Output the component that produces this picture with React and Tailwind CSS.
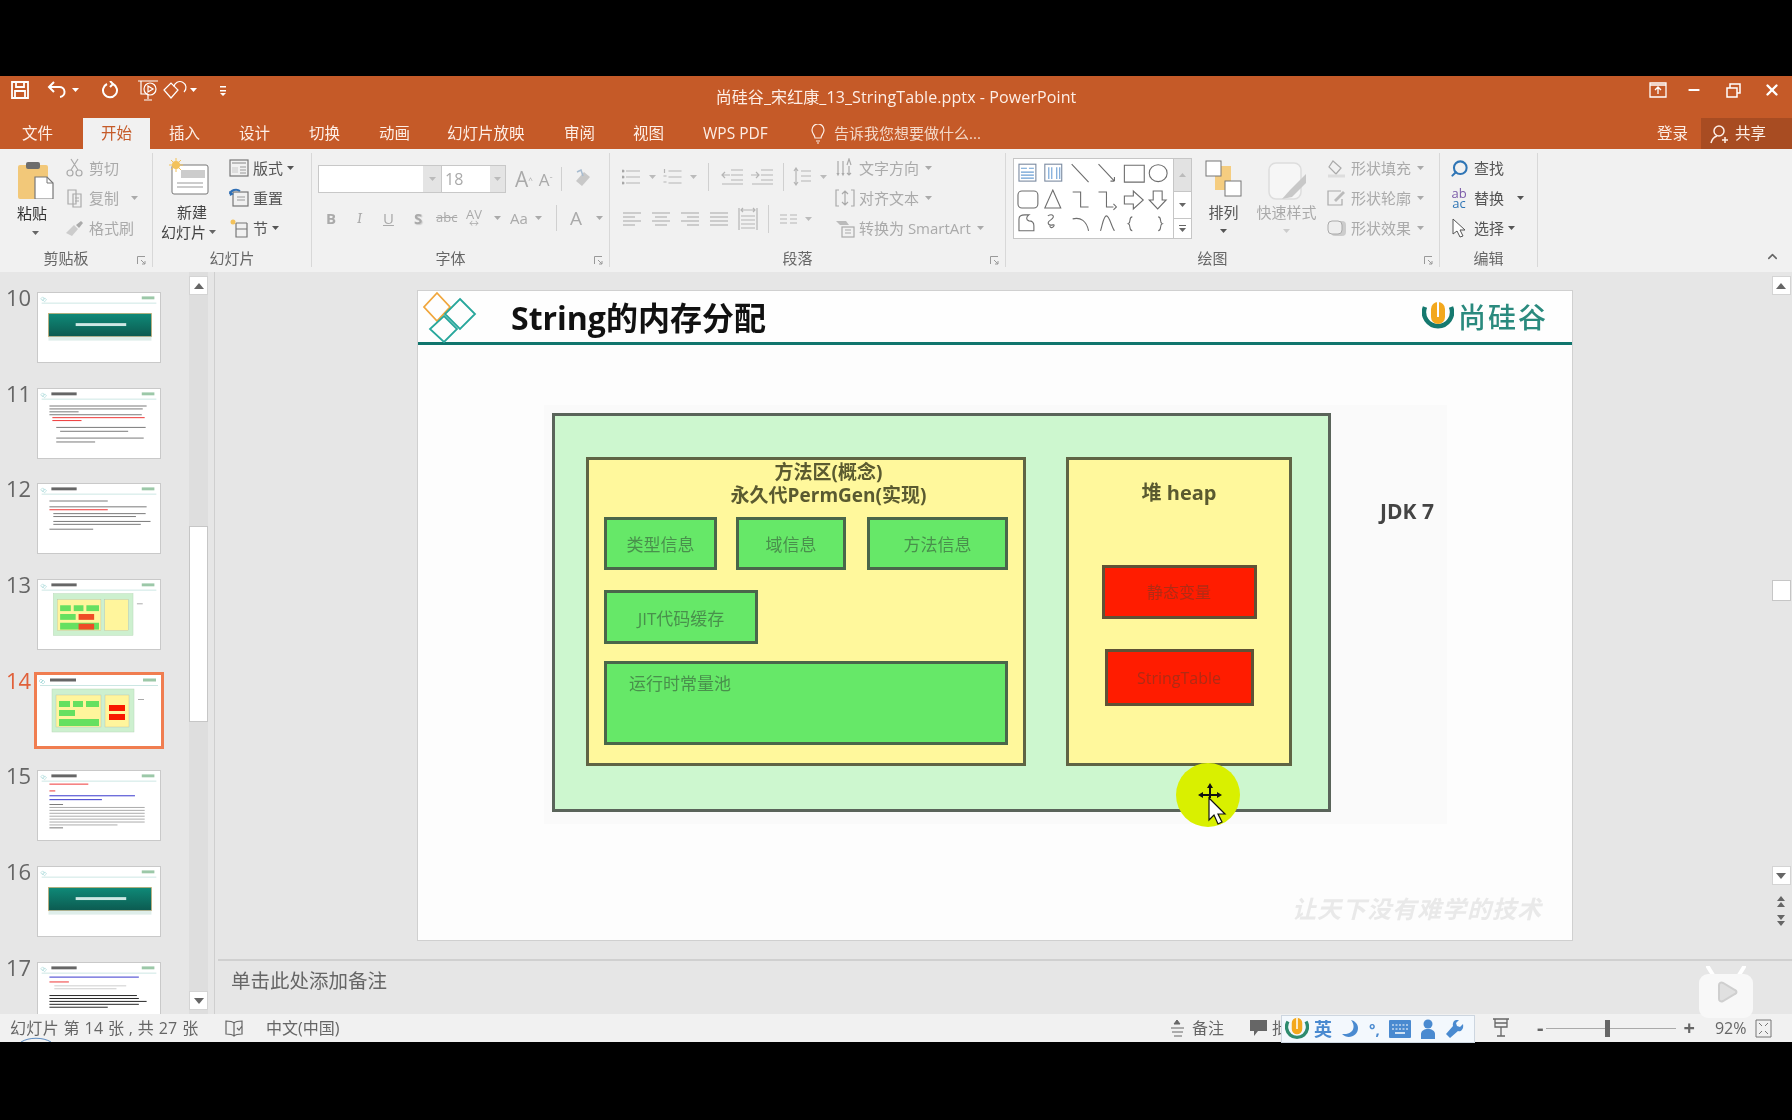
import React from 'react';
import { Search, X, Minus, ChevronUp } from 'lucide-react';

const Caret = ({ className = '' }) => (
  <svg width="7" height="4" viewBox="0 0 7 4" className={`shrink-0 ${className}`}>
    <path d="M0 0h7L3.5 4z" fill="currentColor" />
  </svg>
);

const Launcher = () => (
  <svg width="9" height="9" viewBox="0 0 9 9" className="absolute right-[6px] bottom-[2px] text-[#999]" fill="none" stroke="currentColor">
    <path d="M.5 8V.5H8M4 4l4 4M8 5v3H5" />
  </svg>
);

const Group = ({ width, label, launcher, children }) => (
  <div className={`${width} relative flex h-full shrink-0 flex-col border-r border-[#d8d8d8]`}>
    <div className="h-[97px]">{children}</div>
    <div className={`flex h-[17px] items-center justify-center text-[15px] text-[#666] ${launcher ? 'pr-[20px]' : ''}`}>{label}</div>
    {launcher && <Launcher />}
  </div>
);

const Row = ({ icon, label, caret, gap = 'ml-[4px]', dark, caretClass = 'ml-[6px]' }) => (
  <div className={`flex h-[30px] items-center text-[15px] ${dark ? 'text-[#555]' : 'text-[#aaa]'}`}>
    <div className="flex w-[20px] shrink-0 justify-center">{icon}</div>
    <span className={`whitespace-nowrap ${gap}`}>{label}</span>
    {caret && <Caret className={caretClass} />}
  </div>
);

const SmallIcon = ({ children, w = 20, h = 20 }) => (
  <svg width={w} height={h} viewBox="0 0 20 20" fill="none" stroke="currentColor" strokeWidth="1.2">{children}</svg>
);

const Lines = ({ kind }) => {
  const map = {
    left: ['M1 3h18', 'M1 7h12', 'M1 11h18', 'M1 15h12'],
    center: ['M1 3h18', 'M4 7h12', 'M1 11h18', 'M4 15h12'],
    right: ['M1 3h18', 'M7 7h12', 'M1 11h18', 'M7 15h12'],
    justify: ['M1 3h18', 'M1 7h18', 'M1 11h18', 'M1 15h18'],
    columns: ['M1 5h7M11 5h7', 'M1 9h7M11 9h7', 'M1 13h7M11 13h7'],
  };
  return (
    <svg width="20" height="18" viewBox="0 0 20 18" fill="none" stroke="#b5b5b5" strokeWidth="1.2">
      {map[kind].map((d) => <path key={d} d={d} />)}
    </svg>
  );
};

const Gallery = () => (
  <div className="mt-[5px] flex h-[81px] w-[179px] border border-[#c6c6c6] bg-white">
    <svg width="160" height="79" viewBox="0 0 160 79" fill="none" stroke="#6d6d6d" strokeWidth="1.1">
      <rect x="5" y="5" width="17" height="17" stroke="#7a8aa0" />
      <path d="M7 9h6M15 9h5M7 13h13M7 16h13M7 19h13" stroke="#6a9ed4" />
      <rect x="31" y="5" width="17" height="17" stroke="#7a8aa0" />
      <path d="M35 8v12M38 8v12M43 8v12M46 8v12" stroke="#6a9ed4" />
      <path d="M58 5l17 18M85 5l16 17M101 22v-4M101 22h-4M111 6h20v17h-20z" />
      <ellipse cx="145" cy="14" rx="9" ry="8.5" />
      <rect x="4" y="32" width="20" height="17" rx="4" />
      <path d="M39 31l8 18H31zM59 33h8v15h8M85 33h8v15h7M100 45l3 3-3 3M111 37h9v-5l10 9-10 9v-5h-9zM140 32h9v9h4l-8.500 9-8.500-9h4z" />
      <path d="M5 72V60c0-3 3-4 6-4h4c-3 2-3 5 0 6 3 0 5 2 5 5v5zM34 57c5-3 8 1 3 4s-2 6 2 5-2 6-3 1M59 60c8-2 14 2 16 12M87 72c2-6 3-15 6-15s5 11 8 15M119 58c-4 0-1 6-4 7 3 1 0 7 4 7M145 58c4 0 1 6 4 7-3 1 0 7-4 7" />
    </svg>
    <div className="flex w-[18px] flex-col border-l border-[#c6c6c6] text-[#666]">
      <div className="flex h-[32px] items-center justify-center bg-[#e2e2e2] text-[#bbb]"><Caret className="rotate-180" /></div>
      <div className="flex h-[27px] items-center justify-center border-t border-[#c6c6c6]"><Caret /></div>
      <div className="flex flex-1 flex-col items-center justify-center gap-[2px] border-t border-[#c6c6c6]">
        <div className="h-px w-[7px] bg-[#666]" />
        <Caret />
      </div>
    </div>
  </div>
);

const Ribbon = () => (
  <div className="flex h-[123px] shrink-0 bg-[#f1f1f1] pt-[4px] pb-[5px]">
    <Group width="w-[153px]" label="剪贴板" launcher>
      <div className="flex pl-[17px]">
        <div className="flex w-[48px] flex-col">
          <svg width="37" height="39" viewBox="0 0 37 39" className="mt-[7px]">
            <rect x="1" y="5" width="30" height="34" rx="2" fill="#f2c879" />
            <rect x="9" y="2" width="14" height="7" rx="2" fill="#6d6d6d" />
            <path d="M18 17h12l6 6v16H18z" fill="#fff" stroke="#777" strokeWidth="1.2" />
            <path d="M30 17v6h6" fill="none" stroke="#777" />
          </svg>
          <span className="mt-[4px] text-[15px] leading-[20px] text-[#333]">粘贴</span>
          <Caret className="mt-[8px] ml-[15px] text-[#666]" />
        </div>
        <div className="flex flex-col">
          <Row label="剪切" icon={<SmallIcon><circle cx="5" cy="15" r="3" /><circle cx="14" cy="15" r="3" /><path d="M6 12l7-11M13 12L6 1" /></SmallIcon>} />
          <Row label="复制" caret caretClass="ml-[12px]" icon={<SmallIcon><path d="M3 2h8v14H3zM8 6h8v13H8zM10 10h4M10 13h4" /></SmallIcon>} />
          <Row label="格式刷" icon={<svg width="20" height="20" viewBox="0 0 20 20"><path d="M1 15l8-8 4 4-6 7z" fill="#ccc" /><path d="M11 7l5-4 2 2-4 5z" fill="#aaa" /></svg>} />
        </div>
      </div>
    </Group>
    <Group width="w-[159px]" label="幻灯片">
      <div className="flex pl-[9px]">
        <div className="relative flex w-[67px] flex-col items-center pr-[14px]">
          <svg width="42" height="37" viewBox="0 0 42 37" className="mt-[5px] mr-[4px] self-end" fill="none">
            <rect x="3" y="7" width="36" height="29" rx="2" fill="#fff" stroke="#777" />
            <rect x="12" y="12" width="24" height="8" fill="#ccc" />
            <path d="M8 25h26M8 29h26" stroke="#999" />
            <circle cx="7" cy="7" r="4" fill="#f3c25a" />
            <path d="M7 0v14M0 7h14M2 2l10 10M12 2L2 12" stroke="#f3c25a" />
          </svg>
          <span className="mt-[7px] ml-[7px] text-[15px] leading-[20px] text-[#444]">新建</span>
          <div className="flex items-center whitespace-nowrap text-[15px] leading-[20px] text-[#444]">幻灯片<Caret className="ml-[3px] text-[#666]" /></div>
        </div>
        <div className="flex flex-col">
          <Row dark label="版式" caret caretClass="ml-[4px]" icon={<SmallIcon><rect x="1" y="2" width="18" height="16" stroke="#777" /><path d="M3 5h14" stroke="#bbb" strokeWidth="2" /><path d="M3 9h6v6H3z" fill="#ddd" stroke="none" /><path d="M11 9h6M11 12h6M11 15h6" stroke="#999" /></SmallIcon>} />
          <Row dark label="重置" icon={<SmallIcon><rect x="4" y="4" width="15" height="14" stroke="#777" /><path d="M8 9h8M8 12h8" stroke="#999" /><path d="M1 6a6 5 0 0 1 10-3" stroke="#2f6fb5" strokeWidth="2" /><path d="M0 3l1 5 4-2z" fill="#2f6fb5" stroke="none" /></SmallIcon>} />
          <Row dark label="节" caret caretClass="ml-[4px]" icon={<SmallIcon><path d="M7 5h11M7 5v14h11V5M7 11h11" stroke="#777" /><circle cx="4" cy="4" r="2.500" fill="#f3c25a" stroke="none" /></SmallIcon>} />
        </div>
      </div>
    </Group>
    <Group width="w-[298px]" label="字体" launcher>
      <div className="pl-[6px] text-[#aaa]">
        <div className="flex h-[50px] items-center pt-[2px]">
          <div className="flex h-[28px] w-[124px] border border-[#c8c8c8] bg-white">
            <div className="flex-1" />
            <div className="flex w-[18px] items-center justify-center bg-[#e4e4e4] text-[#bbb]"><Caret /></div>
          </div>
          <div className="flex h-[28px] w-[64px] border border-l-0 border-[#c8c8c8] bg-white">
            <span className="flex-1 pl-[3px] text-[16px] leading-[26px] text-[#aaa]">18</span>
            <div className="flex w-[15px] items-center justify-center bg-[#e4e4e4] text-[#bbb]"><Caret /></div>
          </div>
          <span className="ml-[9px] text-[21px] leading-none">A<sup className="text-[8px]">^</sup></span>
          <span className="ml-[6px] text-[17px] leading-none">A<sup className="text-[8px]">ˇ</sup></span>
          <div className="ml-[8px] h-[24px] w-px bg-[#d0d0d0]" />
          <svg width="18" height="20" viewBox="0 0 18 20" className="ml-[12px]"><path d="M2 12l8-9 6 5-8 9z" fill="#c8c8c8" /><path d="M3 3l4-2 2 6" fill="none" stroke="#a8bcd0" strokeWidth="1.500" /></svg>
        </div>
        <div className="flex h-[30px] items-center text-[15px]">
          <span className="ml-[8px] w-[12px] font-bold">B</span>
          <span className="ml-[19px] w-[10px] font-serif italic">I</span>
          <span className="ml-[16px] w-[12px] underline">U</span>
          <span className="ml-[19px] w-[12px] font-bold [text-shadow:1px_1px_1px_#ccc]">S</span>
          <span className="ml-[10px] w-[22px] text-[13px] line-through">abc</span>
          <span className="ml-[6px] flex w-[20px] flex-col items-center text-[13px] leading-[11px]">AV<span className="text-[10px] leading-[7px]">↔</span></span>
          <Caret className="ml-[10px]" />
          <span className="ml-[9px] w-[20px]">Aa</span>
          <Caret className="ml-[5px]" />
          <div className="ml-[14px] h-[26px] w-px bg-[#d0d0d0]" />
          <span className="ml-[13px] w-[14px] text-[19px]">A</span>
          <Caret className="ml-[12px]" />
        </div>
      </div>
    </Group>
    <Group width="w-[396px]" label="段落" launcher>
      <div className="flex pl-[12px]">
        <div className="flex w-[213px] flex-col pt-[9px]">
          <div className="flex h-[30px] items-center text-[#bbb]">
            <svg width="18" height="18" viewBox="0 0 18 18" stroke="#b5b5b5" strokeWidth="1.2"><path d="M4 3h14M4 9h14M4 15h14" /><circle cx="1" cy="3" r="1" /><circle cx="1" cy="9" r="1" /><circle cx="1" cy="15" r="1" /></svg>
            <Caret className="ml-[9px]" />
            <svg width="19" height="18" viewBox="0 0 18 18" stroke="#b5b5b5" strokeWidth="1.2" className="ml-[7px]"><path d="M5 3h13M5 9h13M5 15h13M1 1v4M0 8h3M0 14h3" /></svg>
            <Caret className="ml-[8px]" />
            <div className="ml-[11px] h-[28px] w-px bg-[#d0d0d0]" />
            <svg width="22" height="16" viewBox="0 0 22 16" stroke="#b5b5b5" strokeWidth="1.2" fill="none" className="ml-[12px]"><path d="M10 1h12M10 6h12M10 11h12M1 15h21M1 6h8M4 3L1 6l3 3" /></svg>
            <svg width="22" height="16" viewBox="0 0 22 16" stroke="#b5b5b5" strokeWidth="1.2" fill="none" className="ml-[8px]"><path d="M10 1h12M10 6h12M10 11h12M1 15h21M0 6h8M5 3l3 3-3 3" /></svg>
            <div className="ml-[10px] h-[28px] w-px bg-[#d0d0d0]" />
            <svg width="18" height="20" viewBox="0 0 18 20" stroke="#b5b5b5" strokeWidth="1.2" fill="none" className="ml-[9px]"><path d="M8 4h10M8 9h10M8 14h10M3 1v17M1 4l2-3 2 3M1 15l2 3 2-3" /></svg>
            <Caret className="ml-[9px]" />
          </div>
          <div className="mt-[12px] flex h-[30px] items-center text-[#bbb]">
            <Lines kind="left" />
            <div className="ml-[9px]"><Lines kind="center" /></div>
            <div className="ml-[9px]"><Lines kind="right" /></div>
            <div className="ml-[9px]"><Lines kind="justify" /></div>
            <svg width="20" height="24" viewBox="0 0 20 24" stroke="#b5b5b5" strokeWidth="1.2" fill="none" className="ml-[9px]"><path d="M1 1v22M19 1v22M3 3h14M5 1L3 3l2 2M15 1l2 2-2 2M3 9h14M3 13h14M3 17h14M3 21h14" /></svg>
            <div className="ml-[10px] h-[28px] w-px bg-[#d0d0d0]" />
            <div className="ml-[10px]"><Lines kind="columns" /></div>
            <Caret className="ml-[6px]" />
          </div>
        </div>
        <div className="flex flex-col">
          <Row label="文字方向" caret icon={<SmallIcon><path d="M3 3v14M8 3v14M2 15l1 2 1-2M7 15l1 2 1-2M14 8v9M12 15l2 2 2-2M12 7l2-6 2 6" /></SmallIcon>} />
          <Row label="对齐文本" caret icon={<SmallIcon><path d="M4 2H1v16h3M16 2h3v16h-3M10 4v12M7 6l3-3 3 3M7 14l3 3 3-3" /></SmallIcon>} />
          <Row label="转换为 SmartArt" caret icon={<SmallIcon><path d="M1 3h10l3 4H5z" fill="#bbb" stroke="none" /><rect x="7" y="9" width="12" height="10" /><path d="M10 12h6M10 15h6" /></SmallIcon>} />
        </div>
      </div>
    </Group>
    <Group width="w-[434px]" label="绘图" launcher>
      <div className="flex pl-[7px]">
        <Gallery />
        <div className="ml-[13px] flex w-[37px] flex-col items-center text-[#555]">
          <svg width="37" height="37" viewBox="0 0 37 37" className="mt-[7px]">
            <rect x="10" y="6" width="16" height="24" fill="#f5cd80" />
            <rect x="1" y="1" width="15" height="15" fill="#fff" stroke="#777" />
            <rect x="20" y="21" width="16" height="15" fill="#fff" stroke="#777" />
          </svg>
          <span className="mt-[5px] whitespace-nowrap text-[15px] leading-[20px]">排列</span>
          <Caret className="mt-[7px]" />
        </div>
        <div className="ml-[13px] flex w-[63px] flex-col items-center text-[#aaa]">
          <svg width="38" height="38" viewBox="0 0 38 38" className="mt-[9px]" fill="none">
            <rect x="1" y="1" width="32" height="36" rx="7" fill="#f6f6f6" stroke="#ddd" strokeWidth="1.500" />
            <path d="M38 12L22 28l-8 9 10-2 14-14z" fill="#c8c8c8" />
          </svg>
          <span className="mt-[2px] whitespace-nowrap text-[15px] leading-[20px]">快速样式</span>
          <Caret className="mt-[7px] text-[#ccc]" />
        </div>
        <div className="ml-[9px] flex flex-col">
          <Row label="形状填充" caret icon={<SmallIcon><path d="M6 3l8 7-5 6-7-7z" /><path d="M1 18h17" strokeWidth="3" stroke="#ddd" /></SmallIcon>} />
          <Row label="形状轮廓" caret icon={<SmallIcon><path d="M14 3H1v14h14v-6" /><path d="M7 12l9-9 2 2-9 9z" fill="#bbb" stroke="none" /></SmallIcon>} />
          <Row label="形状效果" caret icon={<svg width="20" height="18" viewBox="0 0 20 18"><rect x="4" y="2" width="15" height="15" rx="4" fill="#ccc" /><rect x="1" y="2" width="14" height="13" rx="4" fill="#eee" stroke="#aaa" /></svg>} />
        </div>
      </div>
    </Group>
    <Group width="w-[98px]" label="编辑">
      <div className="flex flex-col pl-[9px] text-[#555]">
        <Row dark label="查找" gap="ml-[5px]" icon={<Search size={19} strokeWidth={2.6} className="-scale-x-100 text-[#2f75b5]" />} />
        <Row dark label="替换" gap="ml-[5px]" caret caretClass="ml-[13px]" icon={<span className="flex flex-col items-center text-[13px] leading-[10px] text-[#2f75b5]"><span className="text-[#7a5aa8]">ab</span><span>ac</span></span>} />
        <Row dark label="选择" gap="ml-[5px]" caret caretClass="ml-[4px]" icon={<svg width="14" height="20" viewBox="0 0 14 20" fill="#fff" stroke="#555"><path d="M1 1v15l4-3 3 6 3-1-3-6h5z" /></svg>} />
      </div>
    </Group>
    <div className="flex flex-1 items-end justify-end pr-[12px] pb-[3px] text-[#666]">
      <ChevronUp size={15} strokeWidth={2.5} />
    </div>
  </div>
);

const TitleBar = () => (
  <div className="shrink-0 bg-[#c55a28] text-[#fdeee6]">
    <div className="relative flex h-[42px] items-start pt-[5px]">
      <div className="flex h-[18px] items-center pl-[11px] text-white">
        <svg width="18" height="18" viewBox="0 0 18 18" fill="none" stroke="currentColor" strokeWidth="1.800"><path d="M1 1h16v16H1zM5 1v5h8V1M4 17v-7h10v7" /></svg>
        <svg width="20" height="18" viewBox="0 0 20 18" fill="none" stroke="currentColor" strokeWidth="2" className="ml-[18px]"><path d="M2 6h10a5 5 0 0 1 1 10M7 1L2 6l5 5" /></svg>
        <Caret className="ml-[5px]" />
        <svg width="18" height="18" viewBox="0 0 18 18" fill="none" stroke="currentColor" strokeWidth="2" className="ml-[22px]"><path d="M6 3a7 7 0 1 0 6 0M9 0l3 3-3 3" /></svg>
        <svg width="20" height="22" viewBox="0 0 20 22" fill="none" stroke="currentColor" strokeWidth="1.200" className="ml-[19px]"><path d="M0 2h20M3 2v13h7M10 15v5M6 21h8" /><circle cx="12" cy="10" r="6" /><path d="M10 7l5 3-5 3z" /></svg>
        <svg width="24" height="20" viewBox="0 0 24 20" fill="none" stroke="currentColor" strokeWidth="1.200" className="ml-[5px]"><path d="M1 10l7-7 7 7-7 8zM11 7a6 6 0 1 1 10 5" /></svg>
        <Caret className="ml-[3px]" />
        <svg width="8" height="12" viewBox="0 0 8 12" fill="currentColor" className="ml-[22px]"><path d="M1 2h6v1.500H1zM1 6h6v1.500H1zM1 9l3 3 3-3z" /></svg>
      </div>
      <div className="absolute inset-x-0 top-[9px] flex justify-center text-[16px] leading-[24px] tracking-[0.1px] whitespace-nowrap">
        尚硅谷_宋红康_13_StringTable.pptx - PowerPoint
      </div>
      <div className="ml-auto flex h-[18px] items-center text-white">
        <svg width="18" height="16" viewBox="0 0 18 16" fill="none" stroke="currentColor" strokeWidth="1.300"><path d="M1 1h16v14H1zM1 3h16M9 12V6M6 8l3-3 3 3" /></svg>
        <Minus size={16} strokeWidth={3} className="ml-[19px]" />
        <svg width="15" height="15" viewBox="0 0 15 15" fill="none" stroke="currentColor" strokeWidth="1.500" className="ml-[24px]"><path d="M1 5h10v9H1zM4 5V1h10v9h-3" /></svg>
        <X size={18} strokeWidth={3.2} className="mr-[11px] ml-[22px]" />
      </div>
    </div>
    <div className="flex h-[31px] items-center text-[15.5px] whitespace-nowrap">
      <span className="ml-[22px] w-[32px]">文件</span>
      <div className="ml-[29px] flex h-full w-[67px] items-center justify-center bg-[#f1f1f1] text-[#c55a28]">开始</div>
      <span className="ml-[19px] w-[32px]">插入</span>
      <span className="ml-[38px] w-[32px]">设计</span>
      <span className="ml-[38px] w-[32px]">切换</span>
      <span className="ml-[38px] w-[32px]">动画</span>
      <span className="ml-[36px] w-[80px]">幻灯片放映</span>
      <span className="ml-[37px] w-[32px]">审阅</span>
      <span className="ml-[37px] w-[32px]">视图</span>
      <span className="ml-[38px] w-[69px]">WPS PDF</span>
      <svg width="14" height="20" viewBox="0 0 14 20" fill="none" stroke="currentColor" strokeWidth="1.200" className="ml-[39px]"><path d="M4 14c0-3-3-4-3-8a6 6 0 0 1 12 0c0 4-3 5-3 8zM5 17h4M6 19h2" /></svg>
      <span className="ml-[9px] text-[15px] text-[#f3d8c8]">告诉我您想要做什么...</span>
      <span className="ml-auto">登录</span>
      <div className="ml-[13px] flex h-full w-[91px] items-center bg-[#a84c22] pl-[9px]">
        <svg width="20" height="20" viewBox="0 0 20 20" fill="none" stroke="currentColor" strokeWidth="1.500"><circle cx="9" cy="7" r="5" /><path d="M1 19c1-4 3-6 6-7M15 13v6M12 16h6" /></svg>
        <span className="ml-[5px]">共享</span>
      </div>
    </div>
  </div>
);

const ThumbHead = () => (
  <>
    <path d="M4 4l2 2-2 2-2-2zM6 5l2 2-2 2-2-2z" fill="none" stroke="#8cc" strokeWidth=".5" />
    <rect x="3" y="10" width="118" height=".8" fill="#bfe0dc" />
  </>
);

const Thumb = ({ children, title = true }) => (
  <svg width="124" height="71" viewBox="0 0 124 71" className="block border border-[#c9c9c9] bg-white">
    <ThumbHead />
    {title && <rect x="13" y="3.500" width="26" height="3" fill="#666" />}
    <rect x="106" y="3.500" width="13" height="3" fill="#9cc8a8" />
    {children}
  </svg>
);

const TextLines = ({ rows }) => rows.map(([x, y, w, c], i) => (
  <rect key={i} x={x} y={y} width={w} height="1" fill={c || '#777'} />
));

const Section = () => (
  <Thumb title={false}>
    <defs>
      <linearGradient id="sectionFill" x1="0" y1="0" x2="0" y2="1">
        <stop offset="0" stopColor="#0f8a78" />
        <stop offset="1" stopColor="#0c5a50" />
      </linearGradient>
    </defs>
    <rect x="10" y="21" width="106" height="24" fill="url(#sectionFill)" stroke="#d9a860" strokeWidth=".6" />
    <rect x="10" y="45" width="106" height="4" fill="#dfeeea" />
    <rect x="38" y="31" width="52" height="3" fill="#cfe8e4" />
  </Thumb>
);

const MiniDiagram = ({ active }) => (
  <>
    <rect x="15" y="14" width="82" height="43" fill="#cdf0cf" stroke="#b8d8b8" strokeWidth=".5" />
    <rect x="19" y="20" width="45" height="32" fill="#fff59c" stroke="#aaa" strokeWidth=".3" />
    <rect x="68" y="20" width="24" height="32" fill="#fff59c" stroke="#aaa" strokeWidth=".3" />
    <rect x="22" y="26" width="11" height="6" fill="#66e060" />
    <rect x="36" y="26" width="10" height="6" fill="#66e060" />
    <rect x="49" y="26" width="13" height="6" fill="#66e060" />
    <rect x="22" y="35" width="16" height="6" fill="#66e060" />
    <rect x="22" y="44" width="40" height="7" fill="#66e060" />
    {active ? (
      <>
        <rect x="72" y="30" width="16" height="6" fill="#f81800" />
        <rect x="72" y="39" width="16" height="6" fill="#f81800" />
      </>
    ) : (
      <>
        <rect x="41" y="35" width="16" height="6" fill="#ef4a26" />
        <rect x="41" y="45" width="16" height="6" fill="#ef4a26" />
      </>
    )}
    <rect x="101" y="24" width="6" height="1" fill="#aaa" />
  </>
);

const thumbs = [
  [10, <Section key="a" />],
  [11, <Thumb key="b"><TextLines rows={[[11, 17, 100], [11, 20, 96], [11, 23, 30], [11, 26, 95], [14, 29, 95, '#e33'], [14, 32, 30, '#e33'], [18, 39, 92], [22, 43, 70], [18, 50, 90], [18, 54, 40]]} /></Thumb>],
  [12, <Thumb key="c"><TextLines rows={[[11, 17, 60], [11, 23, 100], [11, 26, 60, '#e33'], [15, 30, 95], [15, 33, 85], [15, 38, 100], [15, 41, 90], [11, 46, 45]]} /></Thumb>],
  [13, <Thumb key="d"><MiniDiagram /></Thumb>],
  [14, null],
  [15, <Thumb key="e"><TextLines rows={[[11, 13, 40, '#e33'], [11, 20, 6, '#e33'], [11, 25, 88, '#33c'], [11, 29, 54, '#33c'], [11, 34, 14], [11, 37, 98, '#aaa'], [11, 40, 98, '#aaa'], [11, 43, 98, '#aaa'], [11, 46, 98, '#aaa'], [11, 49, 98, '#aaa'], [11, 52, 98, '#aaa'], [11, 55, 70, '#aaa'], [11, 58, 14]]} /></Thumb>],
  [16, <Section key="f" />],
  [17, <Thumb key="g"><TextLines rows={[[11, 14, 92, '#33c'], [11, 19, 20, '#e33'], [16, 23, 74, '#ccc'], [16, 26, 64, '#ccc'], [11, 33, 90, '#222'], [11, 36, 92, '#222'], [11, 39, 100, '#222'], [11, 42, 92, '#222'], [11, 45, 60, '#222']]} /></Thumb>],
];

const ThumbList = () => (
  <div className="flex h-full w-[189px] shrink-0 flex-col overflow-hidden pt-[20px]">
    {thumbs.map(([n, content]) => (
      <div key={n} className="flex h-[95.700px] shrink-0 items-start">
        <span className={`-mt-[9px] w-[37px] pl-[6px] text-[22px] leading-[28px] ${n === 14 ? 'text-[#e0603a]' : 'text-[#666]'}`}>{n}</span>
        {n === 14 ? (
          <div className="-mt-[3px] -ml-[3px] border-[3px] border-[#f07d50] bg-white">
            <svg width="124" height="71" viewBox="0 0 124 71" className="block">
              <ThumbHead />
              <rect x="13" y="3.500" width="26" height="3" fill="#666" />
              <rect x="106" y="3.500" width="13" height="3" fill="#9cc8a8" />
              <MiniDiagram active />
            </svg>
          </div>
        ) : content}
      </div>
    ))}
  </div>
);

const ScrollBtn = ({ up }) => (
  <div className="flex h-[19px] w-[19px] shrink-0 items-center justify-center border border-[#d4d4d4] bg-white text-[#666]">
    <svg width="10" height="6" viewBox="0 0 10 6" className={up ? 'rotate-180' : ''}><path d="M0 0h10L5 6z" fill="currentColor" /></svg>
  </div>
);

const LeftPanel = () => (
  <div className="flex w-[215px] shrink-0 border-r border-[#cfcfcf]">
    <ThumbList />
    <div className="flex w-[19px] shrink-0 flex-col bg-[#dedede] pt-[4px] pb-[4px]">
      <ScrollBtn up />
      <div className="mt-[231px] h-[196px] w-[19px] border border-[#c6c6c6] bg-white" />
      <div className="flex-1" />
      <ScrollBtn />
    </div>
  </div>
);

const GreenBox = ({ className, children }) => (
  <div className={`flex items-center justify-center border-[3px] border-[#4a664a] bg-[#66e868] pt-[3px] text-[17px] text-[#49904c] ${className}`}>{children}</div>
);

const RedBox = ({ className, children }) => (
  <div className={`flex items-center justify-center border-[3px] border-[#5f5236] bg-[#ff1c00] text-[16px] text-[#b02c14] ${className}`}>{children}</div>
);

const Slide = () => (
  <div className="relative mt-[18px] ml-[202px] h-[651px] w-[1156px] shrink-0 border border-[#d0d0d0] bg-[#fdfdfd]">
    <div className="flex h-[54px] items-center border-b-[3px] border-[#10756d] bg-[#fefefe]">
      <svg width="54" height="52" viewBox="0 0 54 52" fill="none" strokeWidth="1.800" className="mt-[1px] ml-[5px] shrink-0">
        <path d="M14 2l13 14-13 14L1 16z" stroke="#f0a63c" />
        <path d="M37 8l15 15-15 15-15-15z" stroke="#28a79c" />
        <path d="M21 25l13 13-13 13L7 38z" stroke="#28a79c" />
      </svg>
      <span className="mt-[3px] ml-[34px] text-[32px] leading-none font-bold whitespace-nowrap text-[#111]">String的内存分配</span>
      <div className="mr-[24px] ml-auto flex items-center">
        <svg width="32" height="30" viewBox="0 0 32 30" fill="none">
          <path d="M3 5a14 14 0 1 0 26 0" stroke="#16796f" strokeWidth="4.500" />
          <rect x="9" y="0" width="14" height="22" rx="7" fill="#f3a81d" />
          <rect x="15" y="0" width="2" height="15" fill="#fff" />
        </svg>
        <span className="ml-[4px] text-[28px] leading-none font-medium tracking-[2px] text-[#2a8a7e]">尚硅谷</span>
      </div>
    </div>
    <div className="mt-[60px] ml-[126px] flex h-[419px] w-[903px] bg-[#fafafa] pt-[8px] pl-[8px]">
      <div className="flex h-[399px] w-[779px] shrink-0 border-[3px] border-[#5a645a] bg-[#cdf7cf] pt-[41px] pl-[31px]">
        <div className="flex h-[309px] w-[440px] shrink-0 flex-col border-[3px] border-[#5f6444] bg-[#fff89c] pl-[15px]">
          <div className="h-[57px] pt-[1px] pl-[30px] text-center text-[19px] leading-[23px] font-bold text-[#5a5a30]">
            <div>方法区(概念)</div>
            <div>永久代PermGen(实现)</div>
          </div>
          <div className="flex">
            <GreenBox className="h-[53px] w-[113px]">类型信息</GreenBox>
            <GreenBox className="ml-[19px] h-[53px] w-[110px]">域信息</GreenBox>
            <GreenBox className="ml-[21px] h-[53px] w-[141px]">方法信息</GreenBox>
          </div>
          <GreenBox className="mt-[20px] h-[54px] w-[154px]">JIT代码缓存</GreenBox>
          <div className="mt-[17px] h-[84px] w-[404px] border-[3px] border-[#4a664a] bg-[#66e868] pt-[7px] pl-[22px] text-[17px] text-[#49904c]">运行时常量池</div>
        </div>
        <div className="ml-[40px] flex h-[309px] w-[226px] shrink-0 flex-col items-center border-[3px] border-[#5f6444] bg-[#fff89c]">
          <span className="mt-[20px] text-[20px] leading-[26px] font-bold text-[#5a5a30]">堆 heap</span>
          <RedBox className="mt-[59px] h-[54px] w-[155px]">静态变量</RedBox>
          <RedBox className="mt-[30px] h-[57px] w-[149px]">StringTable</RedBox>
        </div>
      </div>
      <span className="mt-[85px] ml-[49px] text-[21px] leading-[26px] font-bold whitespace-nowrap text-[#444]">JDK 7</span>
    </div>
    <span className="absolute right-[30px] bottom-[12px] font-['Liberation_Serif','Noto_Sans_CJK_SC',serif] text-[24px] font-bold tracking-[1px] whitespace-nowrap text-[#e9e9e9] italic">让天下没有难学的技术</span>
    <div className="absolute top-[472px] left-[758px] h-[64px] w-[64px] rounded-full bg-[#d9f000]" />
    <svg width="34" height="44" viewBox="0 0 34 44" className="absolute top-[490px] left-[777px]">
      <path d="M15 2l3 5h-2v6h6v-2l5 3-5 3v-2h-6v2h-2v-2H8v2l-5-3 5-3v2h6V7h-2z" fill="#111" />
      <path d="M14 17v22l5-5 4 9 4-2-4-8h7z" fill="#fff" stroke="#111" strokeWidth="1.200" />
    </svg>
  </div>
);

const RightScrollbar = () => (
  <div className="flex w-[22px] shrink-0 flex-col items-center bg-[#e6e6e6] pt-[4px]">
    <ScrollBtn up />
    <div className="mt-[285px] h-[21px] w-[19px] border border-[#c6c6c6] bg-white" />
    <div className="mt-[265px]"><ScrollBtn /></div>
    <div className="mt-[11px] flex flex-col items-center gap-[6px] text-[#666]">
      <svg width="10" height="12" viewBox="0 0 10 12" fill="currentColor"><path d="M5 0l4 5H1zM5 6l4 5H1z" /></svg>
      <svg width="10" height="12" viewBox="0 0 10 12" fill="currentColor"><path d="M5 6l4-5H1zM5 12l4-5H1z" /></svg>
    </div>
  </div>
);

const StatusBar = () => (
  <div className="relative flex h-[28px] shrink-0 items-center bg-[#f1f1f1] text-[16px] whitespace-nowrap text-[#666]">
    <span className="ml-[10px] w-[188px] tracking-[0.35px]">幻灯片 第 14 张 , 共 27 张</span>
    <svg width="18" height="17" viewBox="0 0 18 17" fill="none" stroke="currentColor" strokeWidth="1.200" className="ml-[27px]"><path d="M9 3C7 1 4 1 1 1v13c3 0 6 0 8 2 2-2 5-2 8-2V1c-3 0-6 0-8 2zM9 3v13M12 8l2 2 3-4" /></svg>
    <span className="ml-[23px] w-[73px]">中文(中国)</span>
    <svg width="13" height="18" viewBox="0 0 13 18" fill="none" stroke="currentColor" className="ml-[832px]"><path d="M3 5l3-4 3 4z" fill="currentColor" /><path d="M0 9h13M1 13h11M3 17h8" /></svg>
    <span className="ml-[8px] w-[32px]">备注</span>
    <svg width="17" height="18" viewBox="0 0 17 18" fill="#666" className="ml-[26px]"><path d="M0 1h17v11H8l-4 5v-5H0z" /></svg>
    <span className="ml-[5px] w-[9px] overflow-hidden">批注</span>
    <svg width="18" height="20" viewBox="0 0 18 20" fill="none" stroke="#666" strokeWidth="1.300" className="ml-[211px]"><path d="M1 1h16M3 1v8h12V1M3 5h12M9 9v9M5 18h8" /></svg>
    <span className="ml-[27px] text-[20px] leading-none font-bold">-</span>
    <div className="relative ml-[3px] h-px w-[130px] bg-[#aaa]">
      <div className="absolute -top-[8px] left-[59px] h-[17px] w-[5px] bg-[#666]" />
    </div>
    <span className="ml-[7px] text-[20px] leading-none font-bold">+</span>
    <span className="ml-[20px]">92%</span>
    <svg width="17" height="19" viewBox="0 0 17 19" fill="none" stroke="#777" className="ml-[9px]"><path d="M1 1h15v17H1zM4 4l3 3M13 4l-3 3M4 15l3-3M13 15l-3-3" /></svg>
    <div className="absolute top-px left-[1281px] flex h-[28px] w-[194px] items-center border border-[#cdd6e0] bg-[#f3f8fd] text-[#4a8ad0]">
      <svg width="24" height="24" viewBox="0 0 32 30" fill="none" className="ml-[3px]">
        <path d="M4 5a14 14 0 1 0 24 0" stroke="#2e8b6e" strokeWidth="4.500" />
        <rect x="9" y="0" width="14" height="22" rx="7" fill="#f3a81d" />
        <rect x="15" y="0" width="2" height="15" fill="#fff" />
      </svg>
      <span className="ml-[5px] text-[18px] leading-none font-bold">英</span>
      <svg width="16" height="18" viewBox="0 0 16 18" fill="currentColor" className="ml-[10px]"><path d="M9 0c5 6 3 15-9 14 6 6 16 2 16-6 0-4-3-7-7-8z" /></svg>
      <span className="ml-[11px] text-[15px] leading-none font-bold">°,</span>
      <svg width="22" height="18" viewBox="0 0 22 18" className="ml-[9px]"><rect width="22" height="18" rx="1" fill="currentColor" /><path d="M3 5h16M3 9h16" stroke="#fff" strokeDasharray="2 1.500" /><path d="M6 13h10" stroke="#fff" strokeWidth="1.500" /></svg>
      <svg width="14" height="20" viewBox="0 0 14 20" fill="currentColor" className="ml-[10px]"><circle cx="7" cy="5" r="4.500" /><path d="M0 20v-5c0-3 3-5 7-5s7 2 7 5v5z" /></svg>
      <svg width="18" height="18" viewBox="0 0 18 18" fill="currentColor" className="ml-[11px]"><path d="M17 4l-3 3-3-1-1-3 3-3c-4-1-7 2-6 6L0 14l4 4 8-7c3 1 6-2 5-7z" /></svg>
    </div>
    <svg width="32" height="5" viewBox="0 0 32 5" fill="none" stroke="#5a8ac0" className="absolute top-[23px] left-[20px]"><path d="M1 5c8-5 22-5 30 0" /></svg>
  </div>
);

const App = () => (
  <div className="relative flex h-[1120px] w-[1792px] flex-col overflow-hidden bg-black font-['Open_Sans','Noto_Sans_CJK_SC',sans-serif] blur-[0.4px]">
    <div className="h-[76px] shrink-0" />
    <TitleBar />
    <Ribbon />
    <div className="flex h-[742px] shrink-0 bg-[#e6e6e6]">
      <LeftPanel />
      <div className="flex min-w-0 flex-1 flex-col">
        <div className="flex h-[687px] shrink-0">
          <div className="flex-1"><Slide /></div>
          <RightScrollbar />
        </div>
        <div className="ml-[3px] flex flex-1 items-center border-t-2 border-[#d0d0d0] pb-[14px] pl-[13px] text-[19.500px] text-[#666]">单击此处添加备注</div>
      </div>
    </div>
    <StatusBar />
    <div className="absolute top-[966px] left-[1699px]">
      <svg width="54" height="54" viewBox="0 0 54 54">
        <path d="M14 9L9 1M40 9l5-8" stroke="#fff" strokeWidth="4" strokeLinecap="round" />
        <rect x="0" y="8" width="54" height="44" rx="9" fill="#f8f8f8" />
        <path d="M20 19c0-2 2-3 4-2l12 7c2 1 2 3 0 4l-12 7c-2 1-4 0-4-2z" fill="#e0e0e0" stroke="#cfcfcf" strokeWidth="2" />
      </svg>
    </div>
  </div>
);

export default App;
